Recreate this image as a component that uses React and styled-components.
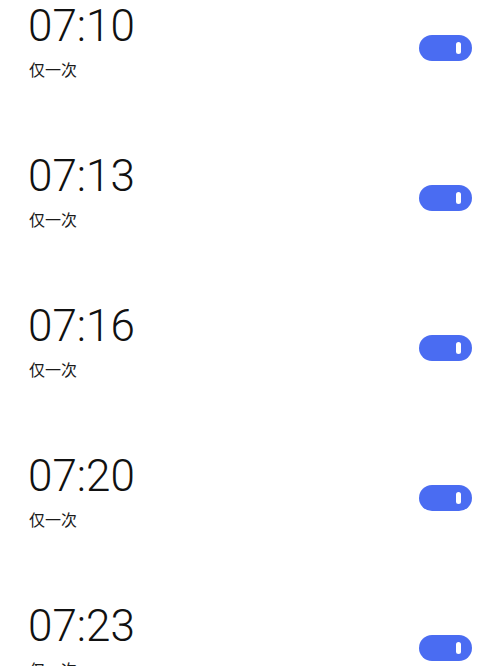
import React from "react";
import styled, { createGlobalStyle } from "styled-components";

const Global = createGlobalStyle`
  html, body { margin: 0; padding: 0; background: #ffffff; }
  body { font-family: Roboto, "Noto Sans CJK SC", sans-serif; overflow: hidden; }
`;

const List = styled.div`
  display: flex;
  flex-direction: column;
  padding: 0 28px 0 29px;
`;

const Row = styled.div`
  display: grid;
  grid-template-columns: 1fr auto;
  align-items: start;
  height: 150px;
`;

const Info = styled.div`
  display: flex;
  flex-direction: column;
  padding-top: 4px;
`;

const Time = styled.div`
  font-family: Roboto, sans-serif;
  font-weight: 300;
  font-size: 44px;
  line-height: 44px;
  color: #111111;
  margin-left: -1px;
`;

const Repeat = styled.div`
  font-family: "Noto Sans CJK SC", sans-serif;
  font-size: 16px;
  line-height: 20px;
  color: #1a1a1a;
  margin-top: 11px;
`;

const Switch = styled.div`
  width: 53px;
  height: 26px;
  margin-top: 35px;
  border-radius: 13px;
  background: #4a6cf2;
  display: flex;
  align-items: center;
  justify-content: flex-end;
  padding-right: 11px;
  box-sizing: border-box;
`;

const Knob = styled.div`
  width: 5px;
  height: 12px;
  border-radius: 3px;
  background: #ffffff;
`;

const alarms = ["07:10", "07:13", "07:16", "07:20", "07:23"];

export default function App() {
  return (
    <>
      <Global />
      <List>
        {alarms.map((t) => (
          <Row key={t}>
            <Info>
              <Time>{t}</Time>
              <Repeat>仅一次</Repeat>
            </Info>
            <Switch>
              <Knob />
            </Switch>
          </Row>
        ))}
      </List>
    </>
  );
}
